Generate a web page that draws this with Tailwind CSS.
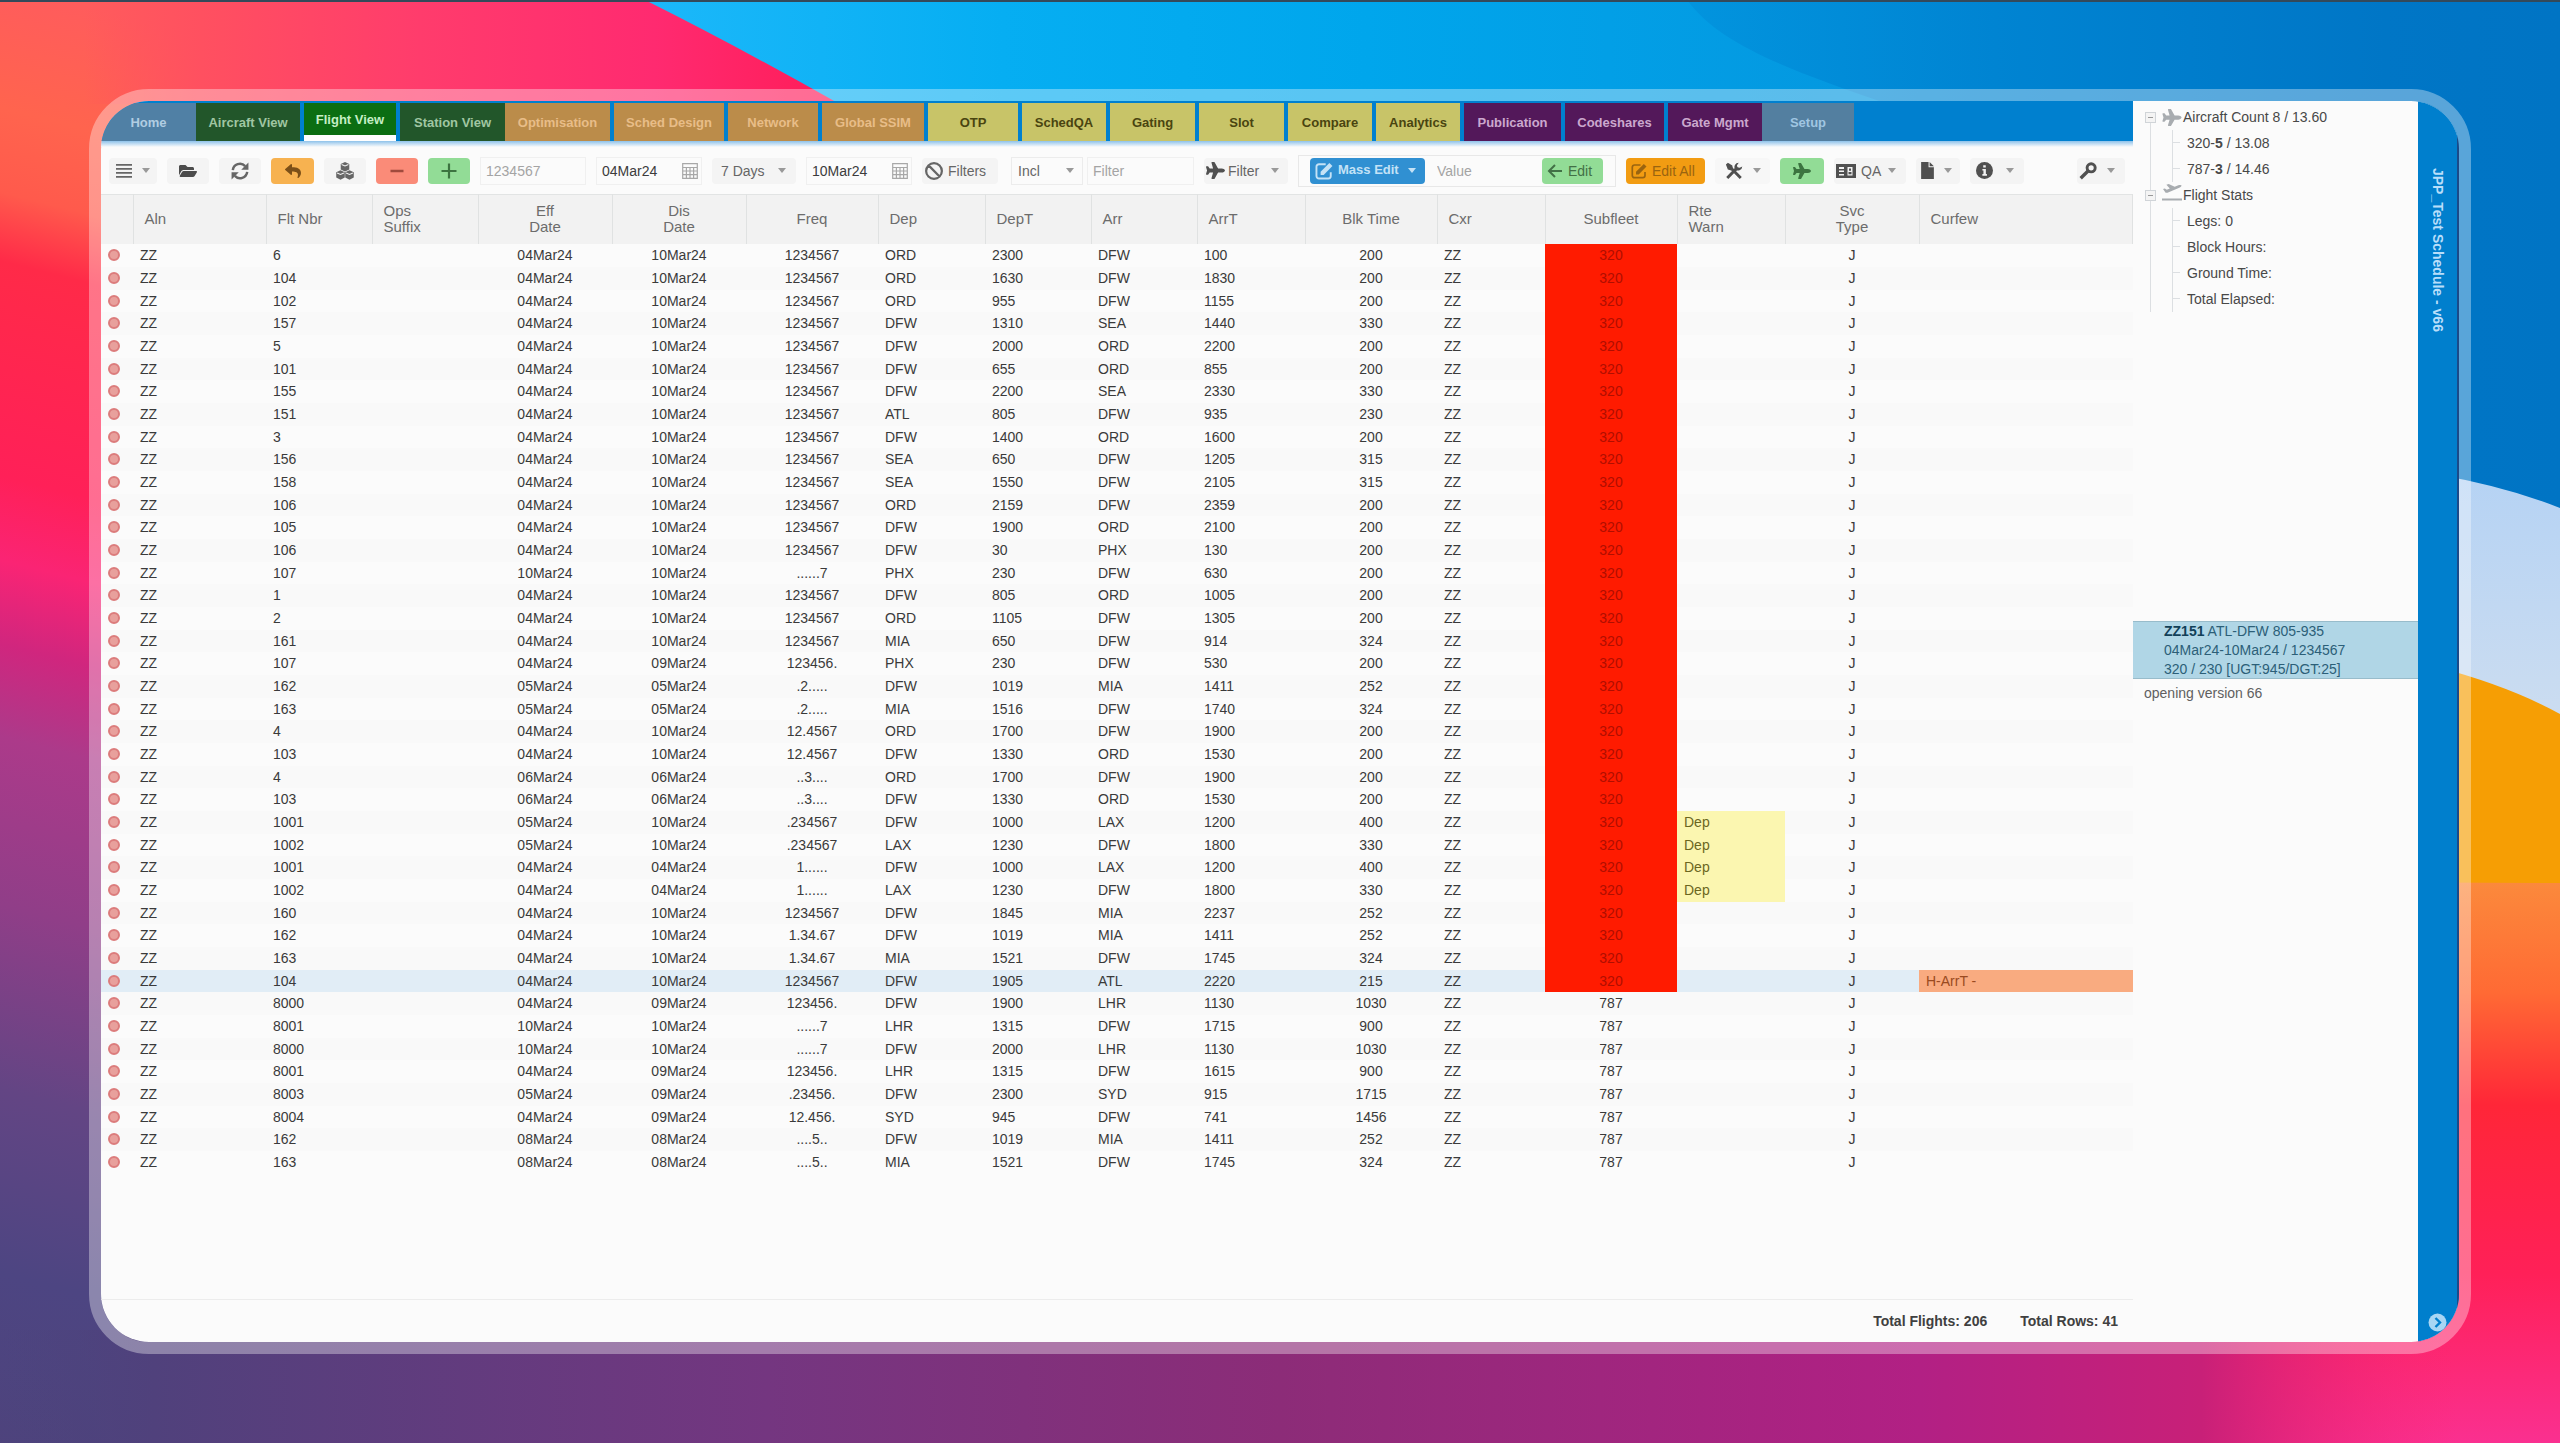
<!DOCTYPE html>
<html lang="en">
<head>
<meta charset="utf-8">
<title>Flight View</title>
<script src="https://cdn.jsdelivr.net/npm/@tailwindcss/browser@4"></script>
</head>
<body class="relative min-h-screen flex p-[89px] bg-[#4b437c] font-['Liberation_Sans',Arial,sans-serif] text-sm text-[#3a3a3a]">

<!-- Wallpaper -->
<svg class="absolute inset-0 w-full h-full" viewBox="0 0 2560 1443" preserveAspectRatio="none" aria-hidden="true">
  <defs>
    <linearGradient id="wl" gradientUnits="userSpaceOnUse" x1="60" y1="0" x2="-300" y2="1443">
      <stop offset="0" stop-color="#ff5c5c"/><stop offset=".08" stop-color="#ff644e"/><stop offset=".135" stop-color="#ff5a4c"/>
      <stop offset=".18" stop-color="#ff2a48"/><stop offset=".32" stop-color="#ff2058"/><stop offset=".375" stop-color="#fa2474"/>
      <stop offset=".43" stop-color="#d0267e"/><stop offset=".49" stop-color="#ac3a8a"/><stop offset=".6" stop-color="#903e88"/>
      <stop offset=".72" stop-color="#634584"/><stop offset=".84" stop-color="#4d4582"/><stop offset="1" stop-color="#4e427a"/>
    </linearGradient>
    <linearGradient id="wt" gradientUnits="userSpaceOnUse" x1="0" y1="0" x2="840" y2="0">
      <stop offset="0" stop-color="#ff5060" stop-opacity="0"/><stop offset=".1" stop-color="#ff5060" stop-opacity="0"/><stop offset=".24" stop-color="#ff5060"/><stop offset=".5" stop-color="#ff3c6c"/><stop offset=".78" stop-color="#ff2a70"/><stop offset="1" stop-color="#ff1c58"/>
    </linearGradient>
    <linearGradient id="wb" gradientUnits="userSpaceOnUse" x1="0" y1="0" x2="2560" y2="0">
      <stop offset="0" stop-color="#4b437c" stop-opacity="0"/><stop offset=".06" stop-color="#50417c"/><stop offset=".3" stop-color="#743680"/><stop offset=".5" stop-color="#8c2c78"/>
      <stop offset=".75" stop-color="#b22084"/><stop offset=".86" stop-color="#c82078"/><stop offset=".96" stop-color="#fc2470" stop-opacity="0"/>
    </linearGradient>
    <linearGradient id="wblue" gradientUnits="userSpaceOnUse" x1="640" y1="0" x2="1850" y2="0">
      <stop offset="0" stop-color="#1cb8fa"/><stop offset=".3" stop-color="#06aef2"/><stop offset=".6" stop-color="#00a6ec"/><stop offset="1" stop-color="#0498e0"/>
    </linearGradient>
    <linearGradient id="wdeep" gradientUnits="userSpaceOnUse" x1="1690" y1="0" x2="2560" y2="0">
      <stop offset="0" stop-color="#0294de"/><stop offset=".35" stop-color="#0084d2"/><stop offset=".8" stop-color="#0076c6"/><stop offset="1" stop-color="#0074c4"/>
    </linearGradient>
    <linearGradient id="wpale" x1="0" y1="0" x2="0" y2="1"><stop offset="0" stop-color="#b4d2f4"/><stop offset="1" stop-color="#dce4ee"/></linearGradient>
    <linearGradient id="wred" gradientUnits="userSpaceOnUse" x1="0" y1="880" x2="0" y2="1443">
      <stop offset="0" stop-color="#fb8a3c"/><stop offset=".2" stop-color="#ff6a34"/><stop offset=".4" stop-color="#ff2638"/><stop offset=".7" stop-color="#ff2058"/><stop offset="1" stop-color="#fa3090"/>
    </linearGradient>
  </defs>
  <rect width="2560" height="1443" fill="url(#wl)"/>
  <rect width="840" height="104" fill="url(#wt)"/>
  <path d="M645 0Q735 45 836 102V400H2560V0Z" fill="url(#wblue)"/>
  <path d="M1687 0C1720 45 1790 70 1885 103V600H2560V0Z" fill="url(#wdeep)"/>
  <path d="M2300 460Q2460 468 2560 508V900H2300Z" fill="url(#wpale)"/>
  <path d="M2300 640Q2470 664 2560 714V1000H2300Z" fill="#f69e04"/>
  <path d="M1900 880L2560 883V1443H1900Z" fill="url(#wred)"/>
  <rect y="1330" width="2560" height="113" fill="url(#wb)"/>
  <rect width="2560" height="2" fill="#34495a"/>
</svg>

<!-- Icon set -->
<svg class="hidden" aria-hidden="true">
  <symbol id="i-menu" viewBox="0 0 16 16"><path d="M0 1h16v1.800H0zM0 5h16v1.800H0zM0 9h16v1.800H0zM0 13h16v1.800H0z"/></symbol>
  <symbol id="i-folder" viewBox="0 0 576 512"><path d="M572.694 292.093L500.27 416.248A63.997 63.997 0 0 1 444.989 448H45.025c-18.523 0-30.064-20.093-20.731-36.093l72.424-124.155A64 64 0 0 1 152 256h399.964c18.523 0 30.064 20.093 20.73 36.093zM152 224h328v-48c0-26.51-21.49-48-48-48H272l-64-64H48C21.49 64 0 85.49 0 112v278.046l69.077-118.418C86.214 242.25 117.989 224 152 224z"/></symbol>
  <symbol id="i-refresh" viewBox="0 0 16 16"><path d="M1.600 7.200A6.400 6.400 0 0 1 12.600 3.600M14.400 8.800A6.400 6.400 0 0 1 3.400 12.400" fill="none" stroke="currentColor" stroke-width="2.200"/><path d="M15.500.4v6.400H9.100zM.5 15.600V9.200h6.400z"/></symbol>
  <symbol id="i-reply" viewBox="0 0 512 512"><path d="M8.309 189.836L184.313 37.851C199.719 24.546 224 35.347 224 56.015v80.053c160.629 1.839 288 34.032 288 186.258 0 61.441-39.581 122.309-83.333 154.132-13.653 9.931-33.111-2.533-28.077-18.631 45.344-145.012-21.507-183.51-176.59-185.742V360c0 20.7-24.3 31.453-39.687 18.164l-176.004-152c-11.071-9.562-11.086-26.753 0-36.328z"/></symbol>
  <symbol id="i-cubes" viewBox="0 0 16 16"><path d="M8 0l3.800 1.700v5L8 8.400 4.200 6.700v-5zM4 7.400l3.800 1.700v4.700L4 15.700.2 13.800V9.100zM12 7.400l3.800 1.700v4.700L12 15.700l-3.800-1.900V9.100z"/><path d="M5 2.200l3 1.300 3-1.300M1 9.700l3 1.300 3-1.300M9 9.700l3 1.300 3-1.300" fill="none" stroke="#f4f4f4" stroke-width=".9"/></symbol>
  <symbol id="i-minus" viewBox="0 0 16 16"><path d="M1.500 6.700h13v2.600h-13z"/></symbol>
  <symbol id="i-plus" viewBox="0 0 16 16"><path d="M.5 6.900h15v2.200H.5z"/><path d="M6.900.5h2.200v15H6.900z"/></symbol>
  <symbol id="i-cal" viewBox="0 0 16 16"><path d="M.7.700h14.600v14.600H.7zM.7 4.500h14.600M.7 8h14.600M.7 11.600h14.600M4.400 4.500v10.800M8 4.500v10.800M11.600 4.500v10.800" fill="none" stroke="currentColor" stroke-width="1.200"/></symbol>
  <symbol id="i-ban" viewBox="0 0 16 16"><path d="M8 1a7 7 0 1 0 0 14A7 7 0 0 0 8 1zM3.200 3l9.700 9.900" fill="none" stroke="currentColor" stroke-width="2"/></symbol>
  <symbol id="i-plane" viewBox="0 0 576 512"><path d="M480 192H365.710L260.610 8.060A16.014 16.014 0 0 0 246.710 0h-65.500c-10.630 0-18.300 10.170-15.380 20.390L214.860 192H112l-43.200-57.600c-3.020-4.030-7.770-6.400-12.800-6.400H16.010C5.600 128-2.040 137.780.490 147.880L32 256 .490 364.120C-2.040 374.220 5.600 384 16.010 384H56c5.040 0 9.780-2.370 12.800-6.400L112 320h102.860l-49.030 171.600c-2.920 10.220 4.750 20.400 15.380 20.400h65.500c5.740 0 11.040-3.080 13.890-8.060L365.710 320H480c35.350 0 96-28.650 96-64s-60.650-64-96-64z"/></symbol>
  <symbol id="i-edit" viewBox="0 0 16 16"><path d="M9.500 2H3.500A2.200 2.200 0 0 0 1.300 4.200v8.300a2.200 2.200 0 0 0 2.200 2.200h8.300a2.200 2.200 0 0 0 2.200-2.200V9" fill="none" stroke="currentColor" stroke-width="1.700"/><path d="M5 11.500V8.700L12.800.9l2.700 2.700-7.800 7.900z"/></symbol>
  <symbol id="i-left" viewBox="0 0 16 16"><path d="M8 2 2 8l6 6M2 8h13" fill="none" stroke="currentColor" stroke-width="2"/></symbol>
  <symbol id="i-tools" viewBox="0 0 16 16"><path d="M2 14.200 11 5M5.500 5.500l8.500 8.700" stroke="currentColor" stroke-width="2.600" fill="none"/><path d="M.8 2.200 2.600.600 6.500 3l.5 3.200-1.500 1.300-3-.8zM15.400 4a3.900 3.900 0 0 1-6.500 2.600A3.900 3.900 0 0 1 12.200.600L10.600 3l.5 1.700 1.900.5z"/></symbol>
  <symbol id="i-card" viewBox="0 0 20 16"><path d="M0 1h20v14H0z"/><path d="M3 4h5v2H3zM3 7.500h5V9H3zM3 11h5v1.500H3zM11.500 4h5v8.500h-5z" fill="#f2f2f2"/><path d="M13 5.500h2v2.300h-2zM12.500 9h3v2.200h-3z"/></symbol>
  <symbol id="i-doc" viewBox="0 0 14 16"><path d="M1 0h7v5h5v11H1z"/><path d="M9 0l4 4H9z"/></symbol>
  <symbol id="i-info" viewBox="0 0 16 16"><circle cx="8" cy="8" r="8"/><path d="M6.800 3h2.400v2.200H6.800zM6 6.500h3.300v4.800h1v1.600H6v-1.600h1V8H6z" fill="#f2f2f2"/></symbol>
  <symbol id="i-key" viewBox="0 0 16 16"><path d="M1.500 14.500 8 8" stroke="currentColor" stroke-width="3" fill="none"/><circle cx="10.800" cy="5.200" r="3.600" fill="none" stroke="currentColor" stroke-width="2.600"/></symbol>
  <symbol id="i-takeoff" viewBox="0 0 20 18"><path d="M0 15.500h20v2H0zM1 6l1.800-.6 2 1.300 3-1.200L4.400 1.700 6.700 1l6 2.700 3.600-1.500c1.300-.5 3-.4 3.200.3.200.8-1 1.800-2.200 2.300L5.500 9.800 3.600 9.700z"/></symbol>
  <symbol id="i-caret" viewBox="0 0 8 5"><path d="M0 0h8L4 5z"/></symbol>
</svg>

<div class="relative flex flex-1 min-w-0 rounded-[60px] border-[12px] border-white/35">
  <div class="flex flex-1 min-w-0 overflow-hidden rounded-[48px] bg-[#fbfbfb]">

    <main class="flex flex-1 min-w-0 flex-col">
      <nav class="flex h-[40px] shrink-0 gap-1 bg-[#0080cf] pt-[2px] text-[13px] font-bold [&>button]:pt-[3px]">
        <button class="w-[95px] -mr-1 bg-[#5080a5] text-[#b0cde2]">Home</button>
        <button class="w-[104px] bg-[#22562a] text-[#a0c6a2]">Aircraft View</button>
        <button class="w-[92px] border-b-[6px] border-white bg-[#0b6e12] text-[#c5eec5]">Flight View</button>
        <button class="w-[105px] -mr-1 bg-[#22562a] text-[#a0c6a2]">Station View</button>
        <button class="w-[105px] bg-[#bb8c4a] text-[#e8bd88]">Optimisation</button>
        <button class="w-[110px] bg-[#bb8c4a] text-[#e8bd88]">Sched Design</button>
        <button class="w-[90px] bg-[#bb8c4a] text-[#e8bd88]">Network</button>
        <button class="w-[102px] bg-[#bb8c4a] text-[#e8bd88]">Global SSIM</button>
        <button class="w-[90px] bg-[#c8c468] text-[#4a4410]">OTP</button>
        <button class="w-[84px] bg-[#c8c468] text-[#4a4410]">SchedQA</button>
        <button class="w-[85px] bg-[#c8c468] text-[#4a4410]">Gating</button>
        <button class="w-[85px] bg-[#c8c468] text-[#4a4410]">Slot</button>
        <button class="w-[84px] bg-[#c8c468] text-[#4a4410]">Compare</button>
        <button class="w-[84px] bg-[#c8c468] text-[#4a4410]">Analytics</button>
        <button class="w-[97px] bg-[#53185a] text-[#cba8ce]">Publication</button>
        <button class="w-[99px] bg-[#53185a] text-[#cba8ce]">Codeshares</button>
        <button class="w-[94px] -mr-1 bg-[#53185a] text-[#cba8ce]">Gate Mgmt</button>
        <button class="w-[92px] bg-[#537fa0] text-[#a0c6e2]">Setup</button>
      </nav>
      <div class="h-[6px] shrink-0 bg-linear-to-b from-[#8ec2ea] to-[#fbfbfb]"></div>

      <div class="flex h-[47px] shrink-0 items-center gap-[10px] pl-[8px] pr-[8px] text-[#666]">
        <button aria-label="Menu" class="flex h-[26px] w-[48px] items-center justify-center gap-[10px] rounded-sm bg-[#f4f4f4]"><svg class="size-4 fill-current"><use href="#i-menu"/></svg><svg class="h-[5px] w-2 fill-[#999]"><use href="#i-caret"/></svg></button>
        <button aria-label="Open" class="flex h-[26px] w-[42px] items-center justify-center rounded-sm bg-[#f4f4f4] text-[#4c4c4c]"><svg class="h-4 w-5 fill-current"><use href="#i-folder"/></svg></button>
        <button aria-label="Refresh" class="flex h-[26px] w-[42px] items-center justify-center rounded-sm bg-[#f4f4f4]"><svg class="size-[18px] fill-current"><use href="#i-refresh"/></svg></button>
        <button aria-label="Undo" class="flex h-[26px] w-[43px] items-center justify-center rounded-sm bg-[#f7b250] text-[#7c5018]"><svg class="size-4 fill-current"><use href="#i-reply"/></svg></button>
        <button aria-label="Cubes" class="flex h-[26px] w-[42px] items-center justify-center rounded-sm bg-[#f4f4f4]"><svg class="size-[18px] fill-current"><use href="#i-cubes"/></svg></button>
        <button aria-label="Remove" class="flex h-[26px] w-[42px] items-center justify-center rounded-sm bg-[#fa8b78] text-[#a04a3c]"><svg class="size-4 fill-current"><use href="#i-minus"/></svg></button>
        <button aria-label="Add" class="flex h-[26px] w-[42px] items-center justify-center rounded-sm bg-[#92dc96] text-[#3c7440]"><svg class="size-4 fill-current"><use href="#i-plus"/></svg></button>
        <input aria-label="Frequency" placeholder="1234567" class="h-[28px] w-[106px] border border-[#f0f0f0] px-[5px] placeholder:text-[#a4a4a4]">
        <div class="flex h-[28px] w-[106px] items-center border border-[#f0f0f0] pl-[5px] pr-[3px]"><input aria-label="From date" value="04Mar24" class="min-w-0 flex-1 text-[#3c3c3c]"><svg class="size-4 fill-current text-[#a8a8a8]"><use href="#i-cal"/></svg></div>
        <button class="flex h-[26px] w-[84px] items-center justify-between rounded-sm bg-[#f4f4f4] pl-[9px] pr-[10px]">7 Days<svg class="h-[5px] w-2 fill-[#999]"><use href="#i-caret"/></svg></button>
        <div class="flex h-[28px] w-[106px] items-center border border-[#f0f0f0] pl-[5px] pr-[3px]"><input aria-label="To date" value="10Mar24" class="min-w-0 flex-1 text-[#3c3c3c]"><svg class="size-4 fill-current text-[#a8a8a8]"><use href="#i-cal"/></svg></div>
        <button class="flex h-[26px] w-[76px] items-center gap-[5px] rounded-sm bg-[#f4f4f4] pl-[3px]"><svg class="size-[18px] fill-current"><use href="#i-ban"/></svg>Filters</button>
        <div class="flex items-center gap-1 pl-[3px]">
          <div class="relative flex items-center">
            <select aria-label="Include" class="h-[28px] w-[72px] appearance-none border border-[#ececec] pl-[6px]"><option>Incl</option><option>Excl</option></select>
            <svg class="absolute right-[9px] h-[5px] w-2 fill-[#999]"><use href="#i-caret"/></svg>
          </div>
          <input aria-label="Filter" placeholder="Filter" class="h-[28px] w-[107px] border border-[#f0f0f0] px-[5px] placeholder:text-[#a4a4a4]">
        </div>
        <button class="flex h-[26px] w-[84px] items-center rounded-sm bg-[#f4f4f4] pl-[2px] pr-[9px]"><svg class="mr-[3px] h-[17px] w-[19px] fill-[#505050]"><use href="#i-plane"/></svg>Filter<svg class="ml-auto h-[5px] w-2 fill-[#999]"><use href="#i-caret"/></svg></button>
        <div class="flex h-[32px] w-[318px] items-center border border-[#e8e8e8] pl-[11px] pr-[12px]">
          <button class="flex h-[26px] w-[115px] shrink-0 items-center rounded-sm bg-[#3090d2] pl-[5px] pr-[9px] text-[13px] font-bold text-[#c4e2f6]"><svg class="mr-[5px] size-[18px] fill-current"><use href="#i-edit"/></svg>Mass Edit<svg class="ml-auto h-[5px] w-2 fill-[#c4e2f6]"><use href="#i-caret"/></svg></button>
          <input aria-label="Value" placeholder="Value" class="h-[28px] min-w-0 flex-1 pl-[12px] placeholder:text-[#a4a4a4]">
          <button class="flex h-[26px] w-[61px] shrink-0 items-center gap-[5px] rounded-sm bg-[#92dc96] pl-[5px] text-[#427046]"><svg class="size-4 fill-current"><use href="#i-left"/></svg>Edit</button>
        </div>
        <button class="flex h-[26px] w-[79px] items-center gap-[5px] rounded-sm bg-[#f29c12] pl-[5px] text-[#9a6410]"><svg class="size-4 fill-current"><use href="#i-edit"/></svg>Edit All</button>
        <button aria-label="Tools" class="flex h-[26px] w-[55px] items-center justify-between rounded-sm bg-[#f7f7f7] pl-[10px] pr-[9px] text-[#505050]"><svg class="size-[18px] fill-current"><use href="#i-tools"/></svg><svg class="h-[5px] w-2 fill-[#999]"><use href="#i-caret"/></svg></button>
        <button aria-label="Flights" class="flex h-[26px] w-[44px] items-center justify-center rounded-sm bg-[#92dc96] text-[#3c7440]"><svg class="h-4 w-5 fill-current"><use href="#i-plane"/></svg></button>
        <button class="flex h-[26px] w-[72px] items-center gap-[5px] rounded-sm bg-[#f4f4f4] pl-[2px] pr-[10px]"><svg class="h-4 w-5 fill-[#505050]"><use href="#i-card"/></svg>QA<svg class="ml-auto h-[5px] w-2 fill-[#999]"><use href="#i-caret"/></svg></button>
        <button aria-label="Reports" class="flex h-[26px] w-[44px] items-center justify-between rounded-sm bg-[#f4f4f4] pl-[4px] pr-[8px]"><svg class="h-[17px] w-[15px] fill-[#505050]"><use href="#i-doc"/></svg><svg class="h-[5px] w-2 fill-[#999]"><use href="#i-caret"/></svg></button>
        <button aria-label="Info" class="flex h-[26px] w-[54px] items-center justify-between rounded-sm bg-[#f4f4f4] pl-[6px] pr-[10px]"><svg class="size-[17px] fill-[#505050]"><use href="#i-info"/></svg><svg class="h-[5px] w-2 fill-[#999]"><use href="#i-caret"/></svg></button>
        <button aria-label="Access" class="ml-auto flex h-[26px] w-[48px] items-center justify-between rounded-sm bg-[#f4f4f4] pl-[2px] pr-[10px] text-[#505050]"><svg class="size-[18px] fill-current"><use href="#i-key"/></svg><svg class="h-[5px] w-2 fill-[#999]"><use href="#i-caret"/></svg></button>
      </div>

      <table class="w-full table-fixed border-collapse">
        <colgroup>
          <col class="w-[32px]"><col class="w-[133px]"><col class="w-[106px]"><col class="w-[106px]"><col class="w-[134px]"><col class="w-[134px]"><col class="w-[132px]"><col class="w-[107px]"><col class="w-[106px]"><col class="w-[106px]"><col class="w-[108px]"><col class="w-[132px]"><col class="w-[108px]"><col class="w-[132px]"><col class="w-[108px]"><col class="w-[134px]"><col>
        </colgroup>
        <thead>
          <tr class="h-[49px] border-t border-[#e2e4e4] bg-[#f2f2f2] text-left text-[15px] leading-4 text-[#6c6c6c] [&>th]:border-r [&>th]:border-[#e0e2e2] [&>th]:px-[11px] [&>th]:py-0 [&>th]:font-normal">
            <th></th><th>Aln</th><th>Flt Nbr</th><th>Ops<br>Suffix</th><th class="text-center">Eff<br>Date</th><th class="text-center">Dis<br>Date</th><th class="text-center">Freq</th><th>Dep</th><th>DepT</th><th>Arr</th><th>ArrT</th><th class="text-center">Blk Time</th><th>Cxr</th><th class="text-center">Subfleet</th><th>Rte<br>Warn</th><th class="text-center">Svc<br>Type</th><th>Curfew</th>
          </tr>
        </thead>
        <tbody id="rows"></tbody>
      </table>

      <footer class="mt-auto flex h-[43px] shrink-0 items-center justify-end gap-[33px] border-t border-[#ececec] pr-[15px] font-bold text-[#404040]">
        <span>Total Flights: 206</span><span>Total Rows: 41</span>
      </footer>
    </main>

    <aside class="flex w-[285px] shrink-0 flex-col text-[#484848]">
      <div class="h-[520px] pl-[17px] pt-[3px]">
        <ul class="relative leading-[26px]">
          <li>
            <div class="flex h-[26px] items-center"><button aria-label="Collapse aircraft count" class="relative z-10 size-[11px] -ml-[5px] mr-[6px] flex items-center justify-center border border-[#d0d4d8] bg-[#f4f4f4]"><span class="h-px w-[5px] bg-[#999]"></span></button><svg class="mr-[1px] h-[17px] w-5 fill-[#a8acb0]"><use href="#i-plane"/></svg>Aircraft Count 8 / 13.60</div>
            <ul class="pl-[22px] [&>li]:flex [&>li]:h-[26px] [&>li]:border-l [&>li]:border-[#dcdfe2] [&>li]:before:mr-[7px] [&>li]:before:mt-[12px] [&>li]:before:h-px [&>li]:before:w-[7px] [&>li]:before:bg-[#dcdfe2] [&>li]:before:content-['']">
              <li><span>320-<b>5</b> / 13.08</span></li>
              <li><span>787-<b>3</b> / 14.46</span></li>
            </ul>
          </li>
          <li>
            <div class="flex h-[26px] items-center"><button aria-label="Collapse flight stats" class="relative z-10 size-[11px] -ml-[5px] mr-[6px] flex items-center justify-center border border-[#d0d4d8] bg-[#f4f4f4]"><span class="h-px w-[5px] bg-[#999]"></span></button><svg class="mr-[1px] h-[18px] w-5 -mt-[6px] fill-[#a8acb0]"><use href="#i-takeoff"/></svg>Flight Stats</div>
            <ul class="pl-[22px] [&>li]:flex [&>li]:h-[26px] [&>li]:border-l [&>li]:border-[#dcdfe2] [&>li]:before:mr-[7px] [&>li]:before:mt-[12px] [&>li]:before:h-px [&>li]:before:w-[7px] [&>li]:before:bg-[#dcdfe2] [&>li]:before:content-['']">
              <li>Legs: 0</li><li>Block Hours:</li><li>Ground Time:</li><li>Total Elapsed:</li>
            </ul>
          </li>
          <li aria-hidden="true" class="absolute left-0 top-[16px] bottom-0 border-l border-[#dcdfe2]"></li>
        </ul>
      </div>
      <div class="h-[58px] border-y border-[#98bccb] bg-[#b0d6e6] pl-[31px] leading-[19px] text-[#2c5f78]"><b class="text-[#124058]">ZZ151</b> ATL-DFW 805-935<br>04Mar24-10Mar24 / 1234567<br>320 / 230 [UGT:945/DGT:25]</div>
      <p class="pl-[11px] pt-[5px] leading-[19px] text-[#606060]">opening version 66</p>
    </aside>

    <div class="flex w-[41px] shrink-0 flex-col items-center justify-between border-r-2 border-[#1c4a88] bg-[#007fcd] pt-[67px] pb-[10px]">
      <span class="[writing-mode:vertical-rl] font-bold text-[#b8defa]">JPP_Test Schedule - v66</span>
      <button aria-label="Collapse panel"><svg class="size-[19px]" viewBox="0 0 19 19" fill="none"><circle cx="9.500" cy="9.500" r="9" fill="#a8d6f4"/><path d="M7.500 5l4.500 4.500L7.500 14" stroke="#007fcd" stroke-width="2.400"/></svg></button>
    </div>
  </div>
</div>

<script>
// flight | effective | discontinue | frequency | dep | dep time | arr | arr time | block | subfleet
const flights = `6|04Mar24|10Mar24|1234567|ORD|2300|DFW|100|200|320
104|04Mar24|10Mar24|1234567|ORD|1630|DFW|1830|200|320
102|04Mar24|10Mar24|1234567|ORD|955|DFW|1155|200|320
157|04Mar24|10Mar24|1234567|DFW|1310|SEA|1440|330|320
5|04Mar24|10Mar24|1234567|DFW|2000|ORD|2200|200|320
101|04Mar24|10Mar24|1234567|DFW|655|ORD|855|200|320
155|04Mar24|10Mar24|1234567|DFW|2200|SEA|2330|330|320
151|04Mar24|10Mar24|1234567|ATL|805|DFW|935|230|320
3|04Mar24|10Mar24|1234567|DFW|1400|ORD|1600|200|320
156|04Mar24|10Mar24|1234567|SEA|650|DFW|1205|315|320
158|04Mar24|10Mar24|1234567|SEA|1550|DFW|2105|315|320
106|04Mar24|10Mar24|1234567|ORD|2159|DFW|2359|200|320
105|04Mar24|10Mar24|1234567|DFW|1900|ORD|2100|200|320
106|04Mar24|10Mar24|1234567|DFW|30|PHX|130|200|320
107|10Mar24|10Mar24|......7|PHX|230|DFW|630|200|320
1|04Mar24|10Mar24|1234567|DFW|805|ORD|1005|200|320
2|04Mar24|10Mar24|1234567|ORD|1105|DFW|1305|200|320
161|04Mar24|10Mar24|1234567|MIA|650|DFW|914|324|320
107|04Mar24|09Mar24|123456.|PHX|230|DFW|530|200|320
162|05Mar24|05Mar24|.2.....|DFW|1019|MIA|1411|252|320
163|05Mar24|05Mar24|.2.....|MIA|1516|DFW|1740|324|320
4|04Mar24|10Mar24|12.4567|ORD|1700|DFW|1900|200|320
103|04Mar24|10Mar24|12.4567|DFW|1330|ORD|1530|200|320
4|06Mar24|06Mar24|..3....|ORD|1700|DFW|1900|200|320
103|06Mar24|06Mar24|..3....|DFW|1330|ORD|1530|200|320
1001|05Mar24|10Mar24|.234567|DFW|1000|LAX|1200|400|320
1002|05Mar24|10Mar24|.234567|LAX|1230|DFW|1800|330|320
1001|04Mar24|04Mar24|1......|DFW|1000|LAX|1200|400|320
1002|04Mar24|04Mar24|1......|LAX|1230|DFW|1800|330|320
160|04Mar24|10Mar24|1234567|DFW|1845|MIA|2237|252|320
162|04Mar24|10Mar24|1.34.67|DFW|1019|MIA|1411|252|320
163|04Mar24|10Mar24|1.34.67|MIA|1521|DFW|1745|324|320
104|04Mar24|10Mar24|1234567|DFW|1905|ATL|2220|215|320
8000|04Mar24|09Mar24|123456.|DFW|1900|LHR|1130|1030|787
8001|10Mar24|10Mar24|......7|LHR|1315|DFW|1715|900|787
8000|10Mar24|10Mar24|......7|DFW|2000|LHR|1130|1030|787
8001|04Mar24|09Mar24|123456.|LHR|1315|DFW|1615|900|787
8003|05Mar24|09Mar24|.23456.|DFW|2300|SYD|915|1715|787
8004|04Mar24|09Mar24|12.456.|SYD|945|DFW|741|1456|787
162|08Mar24|08Mar24|....5..|DFW|1019|MIA|1411|252|787
163|08Mar24|08Mar24|....5..|MIA|1521|DFW|1745|324|787`.split('\n').map(r => r.split('|'));
const selected = 32;
document.getElementById('rows').innerHTML = flights.map((f, i) => {
  const [flt, eff, dis, freq, dep, dt, arr, at, blk, sub] = f;
  const bg = i === selected ? 'bg-[#e1edf6]' : i % 2 ? 'bg-[#f9f9f9]' : 'bg-[#fbfbfb]';
  const h = i % 3 === 2 ? 'h-[22px]' : 'h-[23px]';
  const subCls = sub === '320' ? 'bg-[#ff1b00] text-[#b00e00]' : '';
  const warn = i >= 25 && i <= 28;
  return `<tr class="${bg} ${h} leading-5 [&>td]:px-[7px] [&>td]:py-0">
    <td><span class="block size-3 rounded-full border-2 border-[#dc7c7c] bg-[#e8a09c]"></span></td>
    <td>ZZ</td><td>${flt}</td><td></td><td class="text-center">${eff}</td><td class="text-center">${dis}</td><td class="text-center">${freq}</td>
    <td>${dep}</td><td>${dt}</td><td>${arr}</td><td>${at}</td><td class="text-center">${blk}</td><td>ZZ</td>
    <td class="text-center ${subCls}">${sub}</td>
    <td class="${warn ? 'bg-[#fbf6b0] text-[#6b661f]' : ''}">${warn ? 'Dep' : ''}</td>
    <td class="text-center">J</td>
    <td class="${i === selected ? 'bg-[#f9ab80] text-[#9a4a20]' : ''}">${i === selected ? 'H-ArrT -' : ''}</td></tr>`;
}).join('');
</script>
</body>
</html>
